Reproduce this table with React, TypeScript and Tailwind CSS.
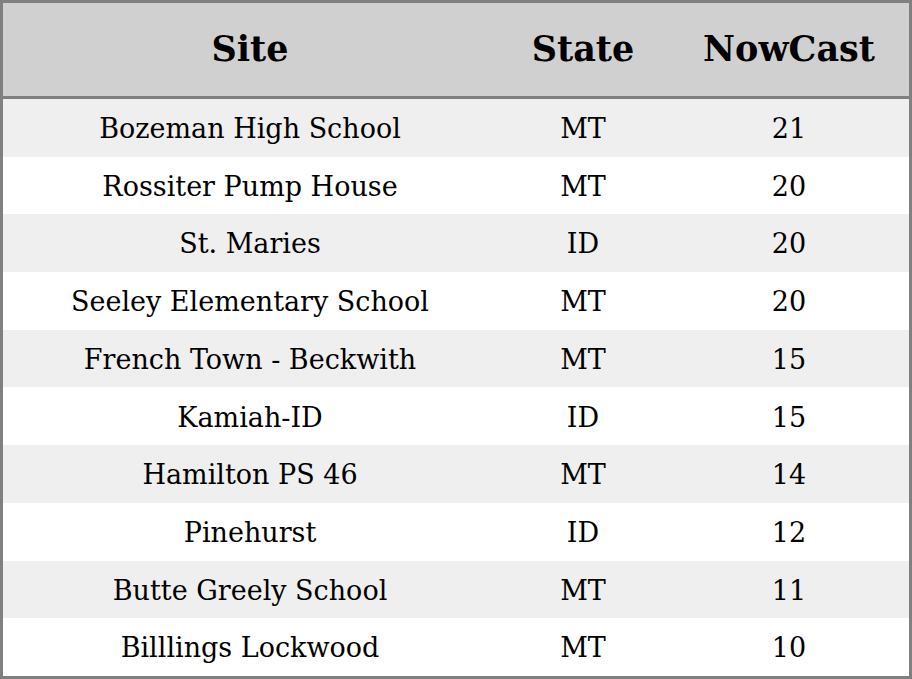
const rows: [string, string, number][] = [
  ['Bozeman High School', 'MT', 21],
  ['Rossiter Pump House', 'MT', 20],
  ['St. Maries', 'ID', 20],
  ['Seeley Elementary School', 'MT', 20],
  ['French Town - Beckwith', 'MT', 15],
  ['Kamiah-ID', 'ID', 15],
  ['Hamilton PS 46', 'MT', 14],
  ['Pinehurst', 'ID', 12],
  ['Butte Greely School', 'MT', 11],
  ['Billlings Lockwood', 'MT', 10],
];

export default function App() {
  return (
    <div className="h-[679px] w-[912px] border-[3px] border-[#808080] bg-white font-['DejaVu_Serif',serif] text-black">
      <table className="h-full w-full table-fixed border-collapse">
        <colgroup>
          <col className="w-[494px]" />
          <col className="w-[172px]" />
          <col />
        </colgroup>
        <thead>
          <tr className="h-[94px] border-b-[3px] border-[#808080] bg-[#d0d0d0] text-[35px] font-bold">
            <th className="text-center">Site</th>
            <th className="text-center">State</th>
            <th className="text-center">NowCast</th>
          </tr>
        </thead>
        <tbody className="text-[27px]">
          {rows.map(([site, state, value], i) => (
            <tr key={site} className={i % 2 === 0 ? 'bg-[#efefef]' : 'bg-white'}>
              <td className="pt-[3px] text-center">{site}</td>
              <td className="pt-[3px] text-center">{state}</td>
              <td className="pt-[3px] text-center">{value}</td>
            </tr>
          ))}
        </tbody>
      </table>
    </div>
  );
}
